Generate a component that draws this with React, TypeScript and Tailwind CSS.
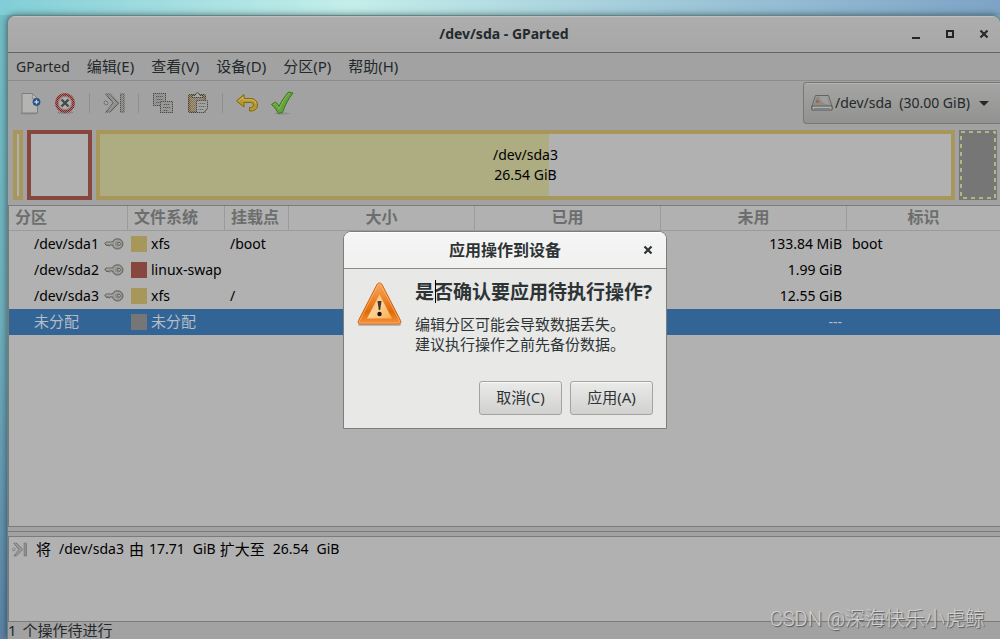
import type { ReactNode } from "react";
import clsx from "clsx";

type Partition = {
  name: string;
  locked: boolean;
  fs: string;
  color: string;
  mount?: string;
  size?: string;
  used?: string;
  unused: string;
  flags?: string;
  selected?: boolean;
};

const menus = ["GParted", "编辑(E)", "查看(V)", "设备(D)", "分区(P)", "帮助(H)"];

const partitions: Partition[] = [
  {
    name: "/dev/sda1",
    locked: true,
    fs: "xfs",
    color: "bg-[#a8975a]",
    mount: "/boot",
    unused: "133.84 MiB",
    flags: "boot",
  },
  {
    name: "/dev/sda2",
    locked: true,
    fs: "linux-swap",
    color: "bg-[#87463e]",
    unused: "1.99 GiB",
  },
  {
    name: "/dev/sda3",
    locked: true,
    fs: "xfs",
    color: "bg-[#a8975a]",
    mount: "/",
    unused: "12.55 GiB",
  },
  {
    name: "未分配",
    locked: false,
    fs: "未分配",
    color: "bg-[#767676]",
    unused: "---",
    selected: true,
  },
];

/** Punches a one pixel checkerboard through its children, as GTK does for insensitive icons */
const Dithered = ({ id, children }: { id: string; children: ReactNode }) => (
  <>
    <defs>
      <pattern id={`${id}-dots`} width="2" height="2" patternUnits="userSpaceOnUse">
        <rect width="2" height="2" fill="#555" />
        <rect width="1" height="1" fill="#fff" />
        <rect x="1" y="1" width="1" height="1" fill="#fff" />
      </pattern>
      <mask id={`${id}-mask`} maskUnits="userSpaceOnUse" x="0" y="0" width="24" height="24">
        <rect width="24" height="24" fill={`url(#${id}-dots)`} />
      </mask>
    </defs>
    <g mask={`url(#${id}-mask)`}>{children}</g>
  </>
);

const NewIcon = () => (
  <svg viewBox="0 0 24 24" className="size-6">
    <ellipse cx="11" cy="22.5" rx="9" ry="1" fill="#8d8d8d" />
    <path d="M4 2.5h10.500l5 5v14.500H4z" fill="#b9b9b8" stroke="#7c7c79" />
    <path d="M5 3.500h9v4.500h4.500V21H5z" fill="#b4b4b3" />
    <path d="M14 2.500c1 2 .5 3.500 0 5 2-.5 4-.5 5 .5" fill="#c4c4c3" stroke="#858583" />
    <circle cx="18.500" cy="11" r="3.700" fill="#234c86" stroke="#335d94" strokeWidth=".6" />
    <path d="M18.500 8.800v4.400M16.300 11h4.400" stroke="#c6cdd6" strokeWidth="1.300" />
  </svg>
);

const DeleteIcon = () => (
  <svg viewBox="0 0 24 24" className="size-6">
    <Dithered id="delete">
      <ellipse cx="12" cy="21.500" rx="8" ry="1.500" fill="#777" />
      <circle cx="12" cy="12" r="8.500" fill="#b4b4b2" stroke="#8b2020" strokeWidth="3" />
      <circle cx="12" cy="12" r="6.500" fill="none" stroke="#7a5a58" strokeWidth=".8" />
    </Dithered>
    <path d="M8.500 8.500l7 7M15.500 8.500l-7 7" stroke="#484846" strokeWidth="2.400" />
  </svg>
);

const ResizeIcon = ({ className = "size-6" }: { className?: string }) => (
  <svg viewBox="0 0 24 24" className={className}>
    <Dithered id="resize">
      <circle cx="4" cy="12" r="2" fill="#a8a8a6" stroke="#5e5e5c" />
      <path
        d="M4 3h4l8.500 9L8 21H4l7-9z"
        fill="#8c8c8a"
        stroke="#555553"
        strokeWidth="1.200"
      />
      <rect x="18.500" y="3" width="3.500" height="18" fill="#80807e" stroke="#555553" />
    </Dithered>
  </svg>
);

const CopyIcon = () => (
  <svg viewBox="0 0 24 24" className="size-6">
    <Dithered id="copy">
      <rect x="2.500" y="2.500" width="12" height="12" fill="#8c8c8a" stroke="#4a4a48" />
      <path d="M5 5.500h7M5 8.500h7M5 11.500h6" stroke="#555" />
      <rect x="9.500" y="10.500" width="12" height="11" fill="#929290" stroke="#4a4a48" />
      <path d="M12 13.500h7M12 16.500h7M12 19.500h5" stroke="#555" />
    </Dithered>
  </svg>
);

const PasteIcon = () => (
  <svg viewBox="0 0 24 24" className="size-6">
    <Dithered id="paste">
      <rect x="2.500" y="3.500" width="17" height="18" rx="1" fill="#7d5d2d" stroke="#4f3d20" />
      <rect x="4.500" y="6" width="13" height="14" fill="#8a7858" />
      <path d="M6 6.500V4.500h3l1-2.500h3l1 2.500h3v2z" fill="#aaa" stroke="#3c3c3a" />
      <path d="M10.500 9.500h11v8l-3.500 4h-7.500z" fill="#a2a2a0" stroke="#4a4a48" />
      <path d="M12.500 12.500h7M12.500 15.500h7M12.500 18.500h5" stroke="#666" />
    </Dithered>
  </svg>
);

const UndoIcon = () => (
  <svg viewBox="0 0 24 24" className="size-6">
    <path
      d="M1.500 10L9 3.500v4h6.500c4.500 0 7 3 7 6.500 0 3.500-2.500 6-6.500 6h-1.500v-3.500h1c2 0 3-1 3-2.500 0-1.500-1-2.500-3-2.500H9v4.500z"
      fill="#b9982a"
      stroke="#806713"
      strokeLinejoin="round"
    />
    <path d="M3.500 10L8 6v2.800h7.500c3 0 5 1.500 5.500 4" fill="none" stroke="#cdb862" />
  </svg>
);

const ApplyIcon = () => (
  <svg viewBox="0 0 24 24" className="size-6">
    <ellipse cx="12" cy="22.500" rx="8" ry="1.200" fill="#8f8f8f" />
    <path
      d="M1.500 13.500l4-2.500c1.500 1 2.500 2.500 3.500 4.500C11.500 10 15 5 18.500 1l4.500 1c-4.500 5.500-8 12-10.500 19.500l-4 1C6.500 19 4.500 16 1.500 13.500z"
      fill="#64a43c"
      stroke="#3c7413"
      strokeLinejoin="round"
    />
    <path
      d="M3.500 13.500l2-1c1.500 1.500 2.500 3 3.500 5.500C12 11.500 15.500 6 19 2.300"
      fill="none"
      stroke="#82b862"
      strokeLinecap="round"
    />
  </svg>
);

const DriveIcon = () => (
  <svg viewBox="0 0 24 24" className="size-6 shrink-0">
    <path d="M5.500 4.500h13L22 15v3.500H2V15z" fill="#a5a5a3" stroke="#646462" strokeLinejoin="round" />
    <path d="M6.500 5.500h11L21 14.500H3z" fill="#8c8c8b" />
    <path d="M9 5.500h8l2 8c-5 0-7-2-10-8z" fill="#abaaa9" opacity=".6" />
    <path d="M2 15h20v4H2z" fill="#b0b0ae" stroke="#575755" strokeLinejoin="round" />
    <path d="M4 17.500h16" stroke="#7d7d7b" />
    <rect x="6" y="9.500" width="3" height="2" fill="#a55b22" />
  </svg>
);

const KeyIcon = () => (
  <svg viewBox="0 0 20 12" className="h-3 w-5">
    <path
      d="M8.500 4H2L.8 5.500 2 7l1 .8L4 7l1.200 1.200L6.500 7h2c.5 2.500 2.500 4 5 4 3 0 5.500-2.200 5.500-5.200S16.500.8 13.500.8C11 .8 9 2 8.500 4z"
      fill="#8e8e8b"
      stroke="#62625f"
      strokeWidth="1"
    />
    <path d="M2 5.200h7" stroke="#c0c0bd" strokeWidth=".7" />
    <circle cx="13.500" cy="5.800" r="3.400" fill="none" stroke="#b4b4b1" strokeWidth=".7" />
    <circle cx="15" cy="5.800" r="1.500" fill="#b1b1b1" stroke="#5d5d5a" strokeWidth=".9" />
  </svg>
);

const WarningIcon = () => (
  <svg viewBox="0 0 48 48" className="size-12 shrink-0">
    <defs>
      <linearGradient id="warn-edge" x1="0" y1="0" x2="0" y2="1">
        <stop offset="0" stopColor="#fba65c" />
        <stop offset=".7" stopColor="#e06c08" />
        <stop offset="1" stopColor="#f5923c" />
      </linearGradient>
      <linearGradient id="warn-face" x1="0" y1="0" x2="1" y2="1">
        <stop offset="0" stopColor="#fdbc74" />
        <stop offset=".5" stopColor="#fecf94" />
        <stop offset="1" stopColor="#f9ae4c" />
      </linearGradient>
    </defs>
    <rect x="3" y="43" width="43" height="3" rx="1.500" fill="#b9b8b6" />
    <path
      d="M22 4.500c1-2 4-2 5 0l18.500 36c1 2 0 3.500-2 3.500h-38c-2 0-3-1.500-2-3.500z"
      fill="url(#warn-edge)"
      stroke="#cc6412"
    />
    <path
      d="M23 5c.7-1.200 2.300-1.200 3 0l18.500 36c.5 1.200 0 2-1 2h-38c-1 0-1.500-.8-1-2z"
      fill="none"
      stroke="#fdc08a"
      strokeWidth=".6"
    />
    <path d="M24.500 14.500L37 38.500H12z" fill="url(#warn-face)" />
    <path d="M22.500 21h4l-1.300 9h-1.400z" fill="#3a3733" />
    <circle cx="24.500" cy="34" r="2.200" fill="#111" />
  </svg>
);

const CloseIcon = () => (
  <svg viewBox="0 0 10 10" className="size-[10px]">
    <path d="M1.500 1.500l7 7M8.500 1.500l-7 7" stroke="currentColor" strokeWidth="2.200" />
  </svg>
);

const TitleBar = () => (
  <header className="relative flex h-9 shrink-0 items-center justify-end border-t border-[#c0c0c0] bg-linear-to-b from-[#adadad] to-[#a7a7a7] pb-0.5">
    <h1 className="absolute inset-x-0 text-center text-sm font-bold">/dev/sda - GParted</h1>
    <div className="relative flex items-center gap-6 pr-[11px]">
      <button aria-label="Minimize" className="flex size-[10px] items-end">
        <span className="mx-auto h-0.5 w-2 bg-[#20252a]" />
      </button>
      <button aria-label="Maximize" className="flex size-[10px] items-center justify-center">
        <span className="size-2 border-2 border-[#20252a]" />
      </button>
      <button aria-label="Close">
        <CloseIcon />
      </button>
    </div>
  </header>
);

const Separator = () => <span className="mx-px h-5 w-px bg-[#8f8f8f]" />;

const ToolButton = ({ label, children }: { label: string; children: ReactNode }) => (
  <button aria-label={label}>{children}</button>
);

const Toolbar = () => (
  <div className="flex h-11 shrink-0 items-center gap-[11px] pl-[10px]">
    <ToolButton label="新建">
      <NewIcon />
    </ToolButton>
    <ToolButton label="删除">
      <DeleteIcon />
    </ToolButton>
    <Separator />
    <ToolButton label="调整大小/移动">
      <ResizeIcon />
    </ToolButton>
    <Separator />
    <ToolButton label="复制">
      <CopyIcon />
    </ToolButton>
    <ToolButton label="粘贴">
      <PasteIcon />
    </ToolButton>
    <Separator />
    <ToolButton label="撤销">
      <UndoIcon />
    </ToolButton>
    <ToolButton label="应用">
      <ApplyIcon />
    </ToolButton>
    <label className="relative ml-auto flex h-[42px] items-center rounded-l border border-r-0 border-[#777] bg-linear-to-b from-[#a5a5a4] to-[#929291] pl-[6px] shadow-[inset_0_1px_0_#b5b5b5]">
      <DriveIcon />
      <select
        aria-label="设备"
        className="w-[166px] appearance-none bg-transparent pl-px text-sm text-[#24292b] outline-none"
      >
        <option>{"/dev/sda\u00a0\u00a0(30.00 GiB)"}</option>
      </select>
      <span className="pointer-events-none absolute right-[11px] border-x-[5px] border-t-[5px] border-x-transparent border-t-[#24292b]" />
    </label>
  </div>
);

const DiskMap = () => (
  <div className="mt-[5px] mb-[5px] flex h-[70px] shrink-0 gap-1 pr-[3px] pl-[5px]">
    <div className="w-[10px] border-4 border-[#a8975a] bg-[#b1b1b1]" />
    <div className="w-[65px] border-4 border-[#87463e] bg-[#b1b1b1]" />
    <div className="relative flex flex-1 border-4 border-[#a8975a] bg-[#b1b1b1]">
      <div className="w-[52.8%] bg-[#aead82]" />
      <p className="absolute inset-0 flex items-center justify-center text-center text-sm leading-5 text-black">
        /dev/sda3
        <br />
        26.54 GiB
      </p>
    </div>
    <div className="w-[38px] bg-[#767676] p-px">
      <svg className="size-full">
        <rect
          x="1"
          y="1"
          width="34"
          height="66"
          fill="none"
          stroke="#b5b483"
          strokeWidth="2"
          strokeDasharray="4 4"
        />
      </svg>
    </div>
  </div>
);

const HeadCell = ({ children, className }: { children: ReactNode; className?: string }) => (
  <th
    className={clsx(
      "border-r border-b border-[#9b9b9b] px-[6px] pb-0.5 text-base leading-[22px] font-bold text-[#6c6e6e] last:border-r-0",
      className,
    )}
  >
    {children}
  </th>
);

const PartitionTable = () => (
  <div className="flex-1 border-y border-l border-[#7b7b7b] bg-[#b1b1b1]">
    <table className="w-full table-fixed border-separate border-spacing-0 text-sm text-black">
      <thead>
        <tr className="h-[25px]">
          <HeadCell className="w-[119px] text-left">分区</HeadCell>
          <HeadCell className="w-[97px] text-left">文件系统</HeadCell>
          <HeadCell className="w-16 text-left">挂载点</HeadCell>
          <HeadCell className="w-[186px]">大小</HeadCell>
          <HeadCell className="w-[186px]">已用</HeadCell>
          <HeadCell className="w-[186px]">未用</HeadCell>
          <HeadCell>标识</HeadCell>
        </tr>
      </thead>
      <tbody>
        {partitions.map((p) => (
          <tr key={p.name} className={clsx("h-[26px]", p.selected && "bg-[#336496] text-[#b5bdc6]")}>
            <td className="pl-[25px]">
              <div className={clsx("flex items-center gap-[5px]", p.selected && "text-[15px]")}>
                {p.name}
                {p.locked && <KeyIcon />}
              </div>
            </td>
            <td className="pl-[3px]">
              <div className={clsx("flex items-center gap-1 whitespace-nowrap", p.selected && "text-[15px]")}>
                <span className={clsx("size-4", p.color)} />
                {p.fs}
              </div>
            </td>
            <td className="pl-[5px]">{p.mount}</td>
            <td className="pr-[5px] text-right">{p.size}</td>
            <td className="pr-[5px] text-right">{p.used}</td>
            <td className="pr-[5px] text-right">{p.unused}</td>
            <td className="pl-[5px]">{p.flags}</td>
          </tr>
        ))}
      </tbody>
    </table>
  </div>
);

const PendingOperations = () => (
  <>
    <div className="h-[9px] shrink-0 pt-1">
      <div className="h-px bg-[#7b7b7b]" />
    </div>
    <section className="h-[86px] shrink-0 border-y border-l border-[#7b7b7b] bg-[#b1b1b1] pt-0.5 pl-0.5 text-black">
      <p className="flex items-center gap-2 text-sm leading-5">
        <ResizeIcon className="size-[17px]" />
        <span className="text-[15px]">将</span>
        <span className="flex gap-[5px]">
          /dev/sda3 <span className="text-[15px]">由</span> 17.71
        </span>
        <span className="flex gap-1">
          GiB <span className="text-[15px]">扩大至</span>
        </span>
        <span>26.54</span>
        <span>GiB</span>
      </p>
    </section>
    <footer className="flex h-[17px] shrink-0 gap-[6px] text-[15px] leading-[17px]">
      <span>1</span>
      <span>个操作待进行</span>
    </footer>
  </>
);

const DialogButton = ({ children }: { children: ReactNode }) => (
  <button className="h-[34px] w-[83px] rounded-[3px] border border-[#a3a3a0] bg-linear-to-b from-[#eaeae9] to-[#d1d1cf] pb-0.5 text-[15px] shadow-[inset_0_1px_0_#fafafa]">
    {children}
  </button>
);

const ConfirmDialog = () => (
  <div
    role="dialog"
    aria-labelledby="confirm-title"
    className="w-[324px] rounded-t-lg border border-[#7d7d7b] bg-[#e8e8e6] text-[#2e3436]"
  >
    <header className="relative flex h-9 items-center justify-end rounded-t-[7px] border-t border-white bg-linear-to-b from-[#f5f5f5] to-[#f1f1f0] pr-[13px] pb-0.5">
      <h2 id="confirm-title" className="absolute inset-x-0 text-center text-base font-bold">
        应用操作到设备
      </h2>
      <button aria-label="Close" className="relative">
        <CloseIcon />
      </button>
    </header>
    <div className="border-t border-[#8b8b88] pt-[11px] pr-[13px] pb-[13px] pl-[11px]">
      <div className="flex gap-3">
        <WarningIcon />
        <div className="relative">
          <h3 className="text-[19px] leading-6 font-bold whitespace-nowrap">
            是否确认要应用待执行操作?
          </h3>
          <span className="absolute top-0 left-5 h-[23px] w-px bg-black" />
          <p className="mt-[10px] text-[15px] leading-5 whitespace-nowrap">
            编辑分区可能会导致数据丢失。
            <br />
            建议执行操作之前先备份数据。
          </p>
        </div>
      </div>
      <div className="mt-[27px] flex justify-end gap-2">
        <DialogButton>取消(C)</DialogButton>
        <DialogButton>应用(A)</DialogButton>
      </div>
    </div>
  </div>
);

export default function App() {
  return (
    <div className="relative flex h-screen flex-col overflow-hidden bg-linear-to-b from-[#74bfc8] via-[#6fb0bd] to-[#5c82a6] font-['Noto_Sans','Noto_Sans_CJK_SC',sans-serif] text-[#24292b]">
      <div className="h-[15px] shrink-0 bg-linear-to-r from-[#82ced6] via-[#c3eeea] via-35% to-[#7da3c6]" />
      <main className="ml-[7px] flex min-h-0 flex-1 flex-col overflow-hidden rounded-t-lg border-t border-l border-[#5f8587] bg-[#a2a2a2] shadow-[0_0_7px_rgba(0,0,0,0.5)]">
        <TitleBar />
        <nav className="flex h-[29px] shrink-0 items-center gap-[17px] border-t border-b border-t-[#66655e] border-b-[#8d8d8d] pl-2 text-[15px]">
          {menus.map((menu) => (
            <button key={menu} className="first:text-sm">
              {menu}
            </button>
          ))}
        </nav>
        <Toolbar />
        <DiskMap />
        <PartitionTable />
        <PendingOperations />
      </main>
      <div className="absolute inset-0 flex items-start justify-center pt-[231px] pl-[10px]">
        <ConfirmDialog />
      </div>
      <p className="absolute right-[15px] bottom-[6px] font-[Roboto,'Noto_Sans_CJK_SC',sans-serif] text-xl leading-7 font-light text-[#d2d2d2] [text-shadow:1px_1px_1px_#555]">
        CSDN @深海快乐小虎鲸
      </p>
    </div>
  );
}
